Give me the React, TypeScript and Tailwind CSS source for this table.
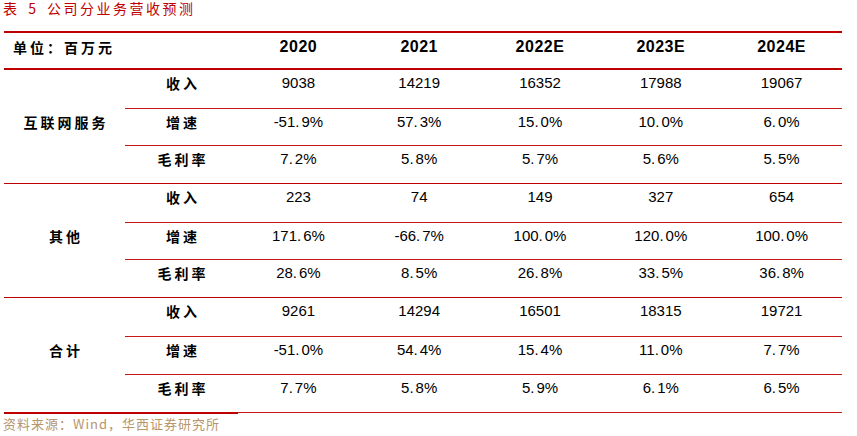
import React from "react";

const data: { cat: string; rows: string[][] }[] = [
  {
    cat: "互联网服务",
    rows: [
      ["收入", "9038", "14219", "16352", "17988", "19067"],
      ["增速", "-51.9%", "57.3%", "15.0%", "10.0%", "6.0%"],
      ["毛利率", "7.2%", "5.8%", "5.7%", "5.6%", "5.5%"],
    ],
  },
  {
    cat: "其他",
    rows: [
      ["收入", "223", "74", "149", "327", "654"],
      ["增速", "171.6%", "-66.7%", "100.0%", "120.0%", "100.0%"],
      ["毛利率", "28.6%", "8.5%", "26.8%", "33.5%", "36.8%"],
    ],
  },
  {
    cat: "合计",
    rows: [
      ["收入", "9261", "14294", "16501", "18315", "19721"],
      ["增速", "-51.0%", "54.4%", "15.4%", "11.0%", "7.7%"],
      ["毛利率", "7.7%", "5.8%", "5.9%", "6.1%", "6.5%"],
    ],
  },
];

const years = ["2020", "2021", "2022E", "2023E", "2024E"];

const cjk = "font-['Noto_Sans_CJK_SC',sans-serif]";
const num = "font-['Liberation_Sans','Noto_Sans_CJK_SC',sans-serif]";

function Num({ v }: { v: string }) {
  const i = v.indexOf(".");
  if (i < 0) return <>{v}</>;
  return (
    <>
      {v.slice(0, i)}
      <span className="mr-[2px]">.</span>
      {v.slice(i + 1)}
    </>
  );
}

export default function App() {
  return (
    <div className="w-[857px] h-[436px] bg-white text-black overflow-hidden">
      <div
        className={`${cjk} h-[31px] pl-[3px] pt-[1px] text-[14px] leading-[14px] tracking-[2.5px] [word-spacing:3px] text-[#c00000]`}
      >
        表 5 公司分业务营收预测
      </div>
      <div className="ml-[4px] w-[838px]">
        {/* header */}
        <div className="grid grid-cols-[234px_repeat(5,1fr)] h-[39px] border-y-2 border-[#c00000]">
          <div
            className={`${cjk} pl-[9px] pt-[4px] text-[14px] leading-[20px] font-bold tracking-[3px]`}
          >
            单位：百万元
          </div>
          {years.map((y) => (
            <div
              key={y}
              className={`${num} text-center pt-[4px] text-[16px] leading-[20px] font-bold tracking-[0.5px]`}
            >
              {y}
            </div>
          ))}
        </div>
        {data.map((sec, si) => (
          <div
            key={sec.cat}
            className={`flex h-[114px] ${si < data.length - 1 ? "border-b border-[#c00000]" : ""}`}
          >
            <div
              className={`${cjk} w-[121px] text-center pt-[42px] text-[14px] leading-[20px] font-bold tracking-[3px] pl-[3px]`}
            >
              {sec.cat}
            </div>
            <div className="flex-1 flex flex-col">
              {sec.rows.map((r, ri) => (
                <div
                  key={ri}
                  className={`grid grid-cols-[113px_repeat(5,1fr)] h-[38px] ${ri > 0 ? "border-t border-[#c81818]" : ""}`}
                >
                  <div
                    className={`${cjk} text-center pt-[3px] text-[14px] leading-[20px] font-bold tracking-[3px] pl-[3px]`}
                  >
                    {r[0]}
                  </div>
                  {r.slice(1).map((v, vi) => (
                    <div
                      key={vi}
                      className={`${num} text-center pt-[3px] text-[15px] leading-[20px]`}
                    >
                      <Num v={v} />
                    </div>
                  ))}
                </div>
              ))}
            </div>
          </div>
        ))}
        <div className="flex items-start h-[3px]">
          <div className="w-[234px] h-[2px] bg-[#c00000]" />
          <div className="flex-1 h-[1px] bg-[#c81818]" />
        </div>
      </div>
      <div
        className={`${cjk} pl-[3px] mt-[1px] text-[13px] leading-[15px] tracking-[1px] text-[#b8956a]`}
      >
        资料来源：Wind，华西证券研究所
      </div>
    </div>
  );
}
